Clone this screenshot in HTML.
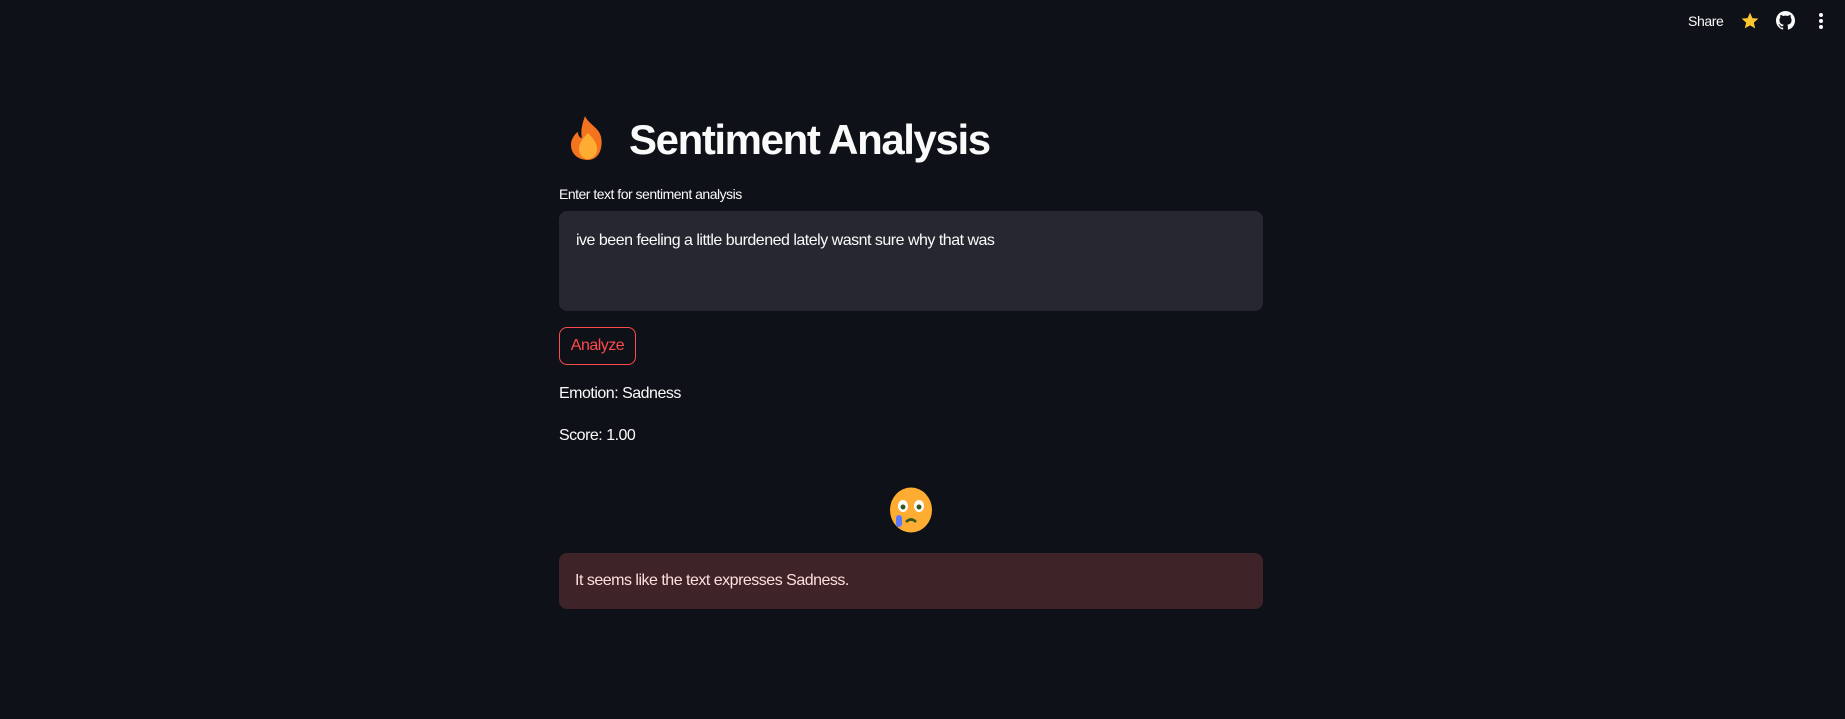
<!DOCTYPE html>
<html><head><meta charset="utf-8"><style>
*{margin:0;padding:0;box-sizing:border-box}
body{width:1845px;height:719px;background:#0e1117;color:#fafafa;font-family:"Liberation Sans",sans-serif;position:relative;overflow:hidden}
.a{position:absolute;white-space:nowrap}
.t{font-size:16px;letter-spacing:-0.5px}
</style></head><body>
<div class="a" style="left:1688px;top:13px;font-size:14px;letter-spacing:-0.4px;color:#fafafa">Share</div>
<svg class="a" style="left:1740px;top:11px" width="20" height="20" viewBox="0 0 24 24"><path fill="#fdc62f" d="M12 2l2.9 6.6 7.1.6-5.4 4.7 1.6 7L12 17.2 5.8 20.9l1.6-7L2 9.2l7.1-.6z"/></svg>
<svg class="a" style="left:1776px;top:11px" width="19" height="19" viewBox="0 0 16 16"><path fill="#fafafa" d="M8 0C3.58 0 0 3.58 0 8c0 3.540 2.29 6.53 5.47 7.59.4.07.55-.17.55-.38v-1.33c-2.23.48-2.7-1.070-2.7-1.070-.36-.92-.89-1.17-.89-1.17-.73-.5.05-.49.05-.49.8.06 1.23.82 1.23.82.72 1.22 1.87.87 2.33.66.07-.52.28-.87.5-1.07-1.78-.2-3.64-.89-3.64-3.95 0-.87.31-1.59.82-2.15-.08-.2-.36-1.02.08-2.12 0 0 .67-.21 2.2.82a7.6 7.6 0 014 0c1.53-1.04 2.2-.82 2.2-.82.44 1.1.16 1.92.08 2.12.51.56.82 1.27.82 2.15 0 3.07-1.87 3.75-3.65 3.95.29.25.54.73.54 1.48v2.2c0 .21.15.46.55.38A8 8 0 0016 8c0-4.42-3.58-8-8-8z"/></svg>
<svg class="a" style="left:1818px;top:11px" width="6" height="20" viewBox="0 0 6 20"><circle cx="3" cy="4" r="2" fill="#fafafa"/><circle cx="3" cy="10" r="2" fill="#fafafa"/><circle cx="3" cy="16" r="2" fill="#fafafa"/></svg>
<svg class="a" style="left:571px;top:116px" width="35" height="45" viewBox="0 0 35 45"><path fill="#f4731f" d="M14 0c2 6 12 11 15 18 4 9 1 26-12 26C6 44 0 37 0 29c0-7 5-12 7-13 0 4 2 6 4 6-2-8 1-16 3-22z"/><path fill="#ffac33" d="M17 17c5 5 9 10 9 16 0 6-4 10-9 10s-9-4-9-10c0-6 4-11 9-16z"/></svg>
<div class="a" style="left:629px;top:112px;font-size:42px;font-weight:bold;letter-spacing:-1.4px;line-height:56px">Sentiment Analysis</div>
<div class="a" style="left:559px;top:186px;font-size:14px;letter-spacing:-0.5px">Enter text for sentiment analysis</div>
<div class="a" style="left:559px;top:211px;width:704px;height:100px;background:#262730;border-radius:8px"></div>
<div class="a t" style="left:576px;top:231px;line-height:20px">ive been feeling a little burdened lately wasnt sure why that was</div>
<div class="a t" style="left:559px;top:327px;width:77px;height:38px;border:1px solid #ff4b4b;border-radius:8px;color:#ff4b4b;line-height:36px;text-align:center">Analyze</div>
<div class="a t" style="left:559px;top:385px">Emotion: Sadness</div>
<div class="a t" style="left:559px;top:427px">Score: 1.00</div>
<svg class="a" style="left:889px;top:487px" width="44" height="46" viewBox="0 0 44 46"><ellipse cx="22" cy="23" rx="21" ry="22.5" fill="#ffac33"/><ellipse cx="14" cy="19" rx="5" ry="6" fill="#fff"/><ellipse cx="30" cy="19" rx="5" ry="6" fill="#fff"/><circle cx="14" cy="20" r="2.5" fill="#352"/><circle cx="30" cy="20" r="2.5" fill="#352"/><path d="M17 35q5-5 10 0" stroke="#352" stroke-width="2.5" fill="none"/><rect x="7" y="28" width="6" height="12" rx="3" fill="#5b79ff"/></svg>
<div class="a" style="left:559px;top:553px;width:704px;height:56px;background:#3e2428;border-radius:8px"></div>
<div class="a t" style="left:575px;top:572px;color:#ffdede">It seems like the text expresses Sadness.</div>
</body></html>
